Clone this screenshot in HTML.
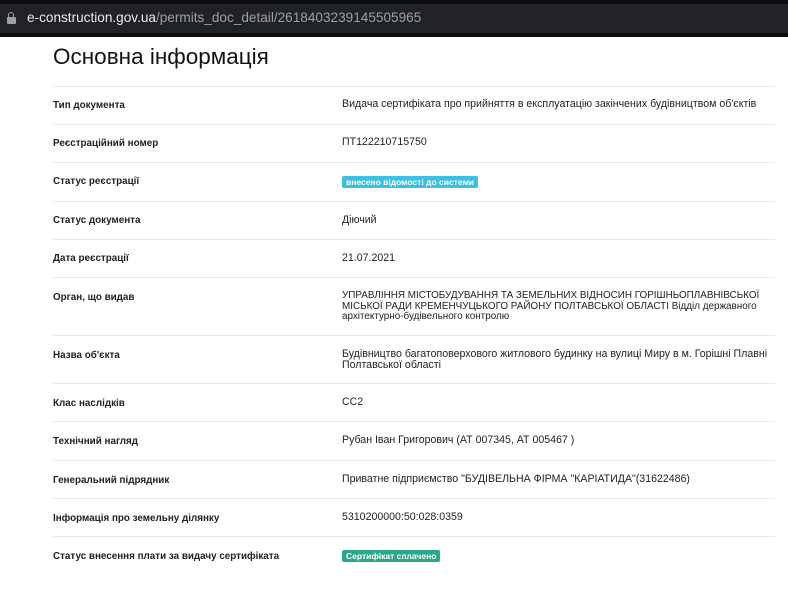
<!DOCTYPE html>
<html><head><meta charset="utf-8"><style>
body{margin:0;width:788px;height:597px;overflow:hidden;background:#fff;font-family:"Liberation Sans",sans-serif;position:relative}
.bar{position:absolute;left:0;top:0;width:788px;height:37px;background:#0b0b12}
.pill{position:absolute;left:0;top:4px;width:788px;height:29px;background:#202226}
.url{position:absolute;left:27px;top:10px;font-size:13.6px;color:#9aa0a6}
.url b{color:#e8eaed;font-weight:normal}
.lock{position:absolute;left:7px;top:17px;width:9px;height:7px;background:#9aa0a6;border-radius:1px}
.lock:before{content:"";position:absolute;left:1px;top:-5px;width:4px;height:5px;border:1.5px solid #9aa0a6;border-bottom:none;border-radius:3px 3px 0 0}
h1{position:absolute;left:53px;top:44px;margin:0;font-size:22.5px;font-weight:normal;color:#111}
.row{position:absolute;left:53px;width:722px;border-top:1px solid #e6eaee;font-size:10.6px;color:#222}
.l{position:absolute;left:0;font-weight:bold;color:#222;font-size:9.85px}
.v{position:absolute;left:289px;width:430px;line-height:10.5px}
.badge{display:inline-block;color:#fff;font-size:8.5px;font-weight:bold;padding:1px 4px;border-radius:2px;line-height:10px}
</style></head><body>
<div class="bar"><div class="pill"></div><div class="lock"></div><div class="url"><b>e-construction.gov.ua</b>/permits_doc_detail/2618403239145505965</div></div>
<h1>Основна інформація</h1>
<div class="row" style="top:86px;height:38px"><div class="l" style="top:13px">Тип документа</div><div class="v" style="top:12px">Видача сертифіката про прийняття в експлуатацію закінчених будівництвом об'єктів</div></div>
<div class="row" style="top:124px;height:38px"><div class="l" style="top:13px">Реєстраційний номер</div><div class="v" style="top:12px">ПТ122210715750</div></div>
<div class="row" style="top:162px;height:39px"><div class="l" style="top:13px">Статус реєстрації</div><div class="v" style="top:13px"><span class="badge" style="background:#3bbfe3">внесено відомості до системи</span></div></div>
<div class="row" style="top:201px;height:38px"><div class="l" style="top:13px">Статус документа</div><div class="v" style="top:13px">Діючий</div></div>
<div class="row" style="top:239px;height:38px"><div class="l" style="top:13px">Дата реєстрації</div><div class="v" style="top:13px">21.07.2021</div></div>
<div class="row" style="top:277px;height:58px"><div class="l" style="top:14px">Орган, що видав</div><div class="v" style="top:13px;white-space:nowrap;font-size:9.9px">УПРАВЛІННЯ МІСТОБУДУВАННЯ ТА ЗЕМЕЛЬНИХ ВІДНОСИН ГОРІШНЬОПЛАВНІВСЬКОЇ<br>МІСЬКОЇ РАДИ КРЕМЕНЧУЦЬКОГО РАЙОНУ ПОЛТАВСЬКОЇ ОБЛАСТІ Відділ державного<br>архітектурно-будівельного контролю</div></div>
<div class="row" style="top:335px;height:48px"><div class="l" style="top:14px">Назва об'єкта</div><div class="v" style="top:13px">Будівництво багатоповерхового житлового будинку на вулиці Миру в м. Горішні Плавні Полтавської області</div></div>
<div class="row" style="top:383px;height:38px"><div class="l" style="top:14px">Клас наслідків</div><div class="v" style="top:13px">СС2</div></div>
<div class="row" style="top:421px;height:39px"><div class="l" style="top:14px">Технічний нагляд</div><div class="v" style="top:13px">Рубан Іван Григорович (АТ 007345, АТ 005467 )</div></div>
<div class="row" style="top:460px;height:38px"><div class="l" style="top:14px">Генеральний підрядник</div><div class="v" style="top:13px">Приватне підприємство "БУДІВЕЛЬНА ФІРМА "КАРІАТИДА"(31622486)</div></div>
<div class="row" style="top:498px;height:38px"><div class="l" style="top:14px">Інформація про земельну ділянку</div><div class="v" style="top:13px">5310200000:50:028:0359</div></div>
<div class="row" style="top:536px;height:40px"><div class="l" style="top:14px">Статус внесення плати за видачу сертифіката</div><div class="v" style="top:13px"><span class="badge" style="background:#2aa889">Сертифікат сплачено</span></div></div>
</body></html>
